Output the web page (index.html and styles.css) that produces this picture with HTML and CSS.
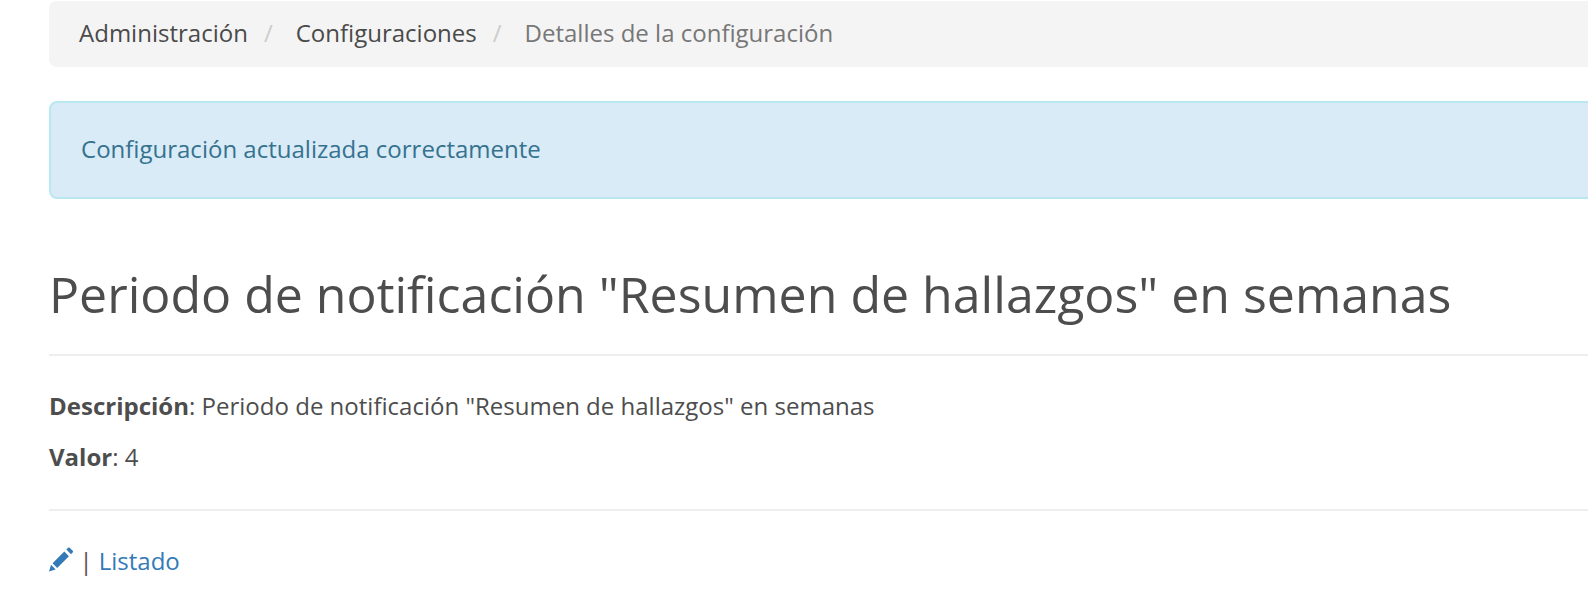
FILE: index.html
```html
<!DOCTYPE html>
<html lang="es">
<head>
<meta charset="utf-8">
<title>Detalles de la configuración</title>
<link rel="stylesheet" href="styles.css">
</head>
<body>
<main class="container">
<ol class="breadcrumb">
<li><a href="#">Administración</a></li>
<li><a href="#">Configuraciones</a></li>
<li class="active">Detalles de la configuración</li>
</ol>
<div class="alert">Configuración actualizada correctamente</div>
<h1 class="page-header">Periodo de notificación "Resumen de hallazgos" en semanas</h1>
<p class="field"><strong>Descripción</strong>: Periodo de notificación "Resumen de hallazgos" en semanas</p>
<p class="field"><strong>Valor</strong>: 4</p>
<hr class="rule">
<div class="actions">
<a class="edit" href="#" aria-label="Editar"><svg class="pencil" viewBox="0 0 24 24"><path d="M0 24 2 17.500 6.500 22ZM3.500 16 15 4.500 19.500 9 8 20.500ZM17 2.500 18.700.8Q19.500 0 20.300.8L23.200 3.700Q24 4.500 23.200 5.300L21.500 7Z"/></svg></a>
<span class="separator">|</span>
<a class="list-link" href="#">Listado</a>
</div>
</main>
</body>
</html>
```
FILE: styles.css
```css
* { box-sizing: border-box; }
body { margin: 0; background: #fff; color: #4d4d4d; font: 24.02px/36px "Open Sans", sans-serif; overflow: hidden; }
a { text-decoration: none; }
.container { width: 1660px; padding: 1px 0 0 49px; }
.breadcrumb { display: flex; list-style: none; margin: 0 0 34px; padding: 14px 30px 16px; height: 66px; background: #f4f4f4; border-radius: 8px; }
.breadcrumb a { color: #4a4a4a; }
.breadcrumb li + li::before { content: "/"; color: #ccc; padding: 0 23px 0 16px; }
.breadcrumb .active { color: #777; }
.alert { height: 98px; padding: 28px 30px; border: 2px solid #b9e8f0; border-radius: 8px; background: #d8ebf6; color: #36728f; }
.page-header { margin: 68px 0 32px; height: 89px; border-bottom: 2px solid #eee; font-size: 50.05px; line-height: 54px; font-weight: 400; white-space: nowrap; }
.field { margin: 0 0 15px; }
.rule { margin: 34px 0 32px; border: 0; border-top: 2px solid #eee; }
.actions { display: flex; align-items: center; }
.edit { display: flex; padding-bottom: 3px; color: #337ab7; }
.pencil { width: 24.5px; height: 24.5px; fill: currentColor; }
.separator { margin: 0 6px; color: #664a52; }
.list-link { color: #337ab7; }
```
